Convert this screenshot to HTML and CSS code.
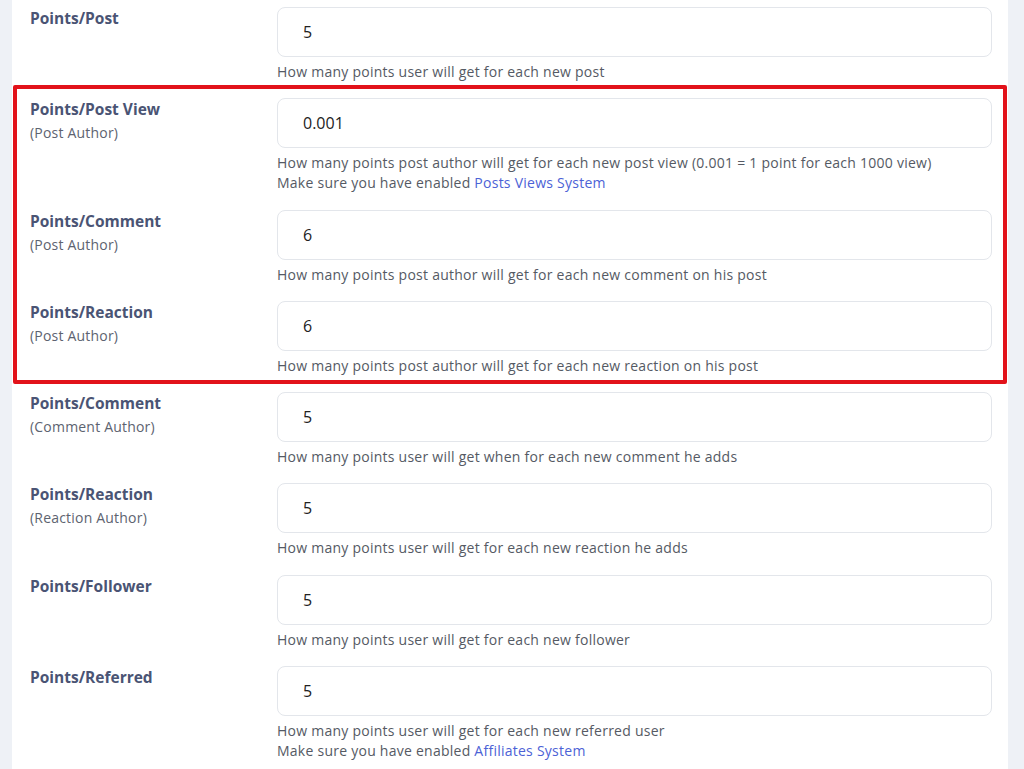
FILE: index.html
```html
<!DOCTYPE html>
<html lang="en">
  <head>
    <meta charset="UTF-8" />
    <title>Points Settings</title>
    <link rel="stylesheet" href="styles.css">
  </head>
  <body>
    <div class="panel">
      <div class="row">
        <label class="label">Points/Post</label>
        <div class="field">
          <input type="text" value="5" />
          <div class="help">How many points user will get for each new post</div>
        </div>
      </div>

      <!-- post author rewards -->
      <div class="highlight">
        <div class="row">
          <label class="label">Points/Post View<small>(Post Author)</small></label>
          <div class="field">
            <input type="text" value="0.001" />
            <div class="help">
              How many points post author will get for each new post view (0.001 = 1 point for each 1000 view)<br />
              Make sure you have enabled <a href="#">Posts Views System</a>
            </div>
          </div>
        </div>
        <div class="row">
          <label class="label">Points/Comment<small>(Post Author)</small></label>
          <div class="field">
            <input type="text" value="6" />
            <div class="help">How many points post author will get for each new comment on his post</div>
          </div>
        </div>
        <div class="row">
          <label class="label">Points/Reaction<small>(Post Author)</small></label>
          <div class="field">
            <input type="text" value="6" />
            <div class="help">How many points post author will get for each new reaction on his post</div>
          </div>
        </div>
      </div>

      <div class="row">
        <label class="label">Points/Comment<small>(Comment Author)</small></label>
        <div class="field">
          <input type="text" value="5" />
          <div class="help">How many points user will get when for each new comment he adds</div>
        </div>
      </div>
      <div class="row">
        <label class="label">Points/Reaction<small>(Reaction Author)</small></label>
        <div class="field">
          <input type="text" value="5" />
          <div class="help">How many points user will get for each new reaction he adds</div>
        </div>
      </div>
      <div class="row">
        <label class="label">Points/Follower</label>
        <div class="field">
          <input type="text" value="5" />
          <div class="help">How many points user will get for each new follower</div>
        </div>
      </div>
      <div class="row">
        <label class="label">Points/Referred</label>
        <div class="field">
          <input type="text" value="5" />
          <div class="help">
            How many points user will get for each new referred user<br />
            Make sure you have enabled <a href="#">Affiliates System</a>
          </div>
        </div>
      </div>
    </div>
  </body>
</html>
```

FILE: styles.css
```css
body {
  margin: 0;
  background-color: #eef1f6;
  font-family: "Open Sans", sans-serif;
}

.panel {
  margin: 0 16px 0 12px;
  padding: 7px 16px 0 18px;
  background-color: #fff;
  min-height: 769px;
  box-sizing: border-box;
}

.row {
  display: grid;
  grid-template-columns: 247px 1fr;
  margin-bottom: 16.3px;
}

.label {
  font-size: 15.5px;
  font-weight: 700;
  line-height: 22px;
  color: #4a5474;
}

.label small {
  display: block;
  margin-top: 2px;
  font-size: 14px;
  font-weight: 400;
  letter-spacing: 0.2px;
  color: #5d6370;
}

input {
  display: block;
  width: 100%;
  height: 50px;
  box-sizing: border-box;
  padding: 0 25px;
  border: 1px solid #e3e6eb;
  border-radius: 8px;
  font-family: "Open Sans", sans-serif;
  font-size: 16px;
  color: #222;
}

.help {
  margin-top: 5px;
  font-size: 14px;
  letter-spacing: 0.25px;
  line-height: 20px;
  color: #555a64;
}

.help a {
  color: #4c62d6;
  text-decoration: none;
}

/* red frame drawn over the post author group */
.highlight {
  position: relative;
  display: flow-root;
}

.highlight::after {
  content: "";
  position: absolute;
  top: -13px;
  bottom: 8px;
  left: -17px;
  right: -15px;
  border: 4px solid #e2121a;
  border-radius: 2px;
  pointer-events: none;
}
```
